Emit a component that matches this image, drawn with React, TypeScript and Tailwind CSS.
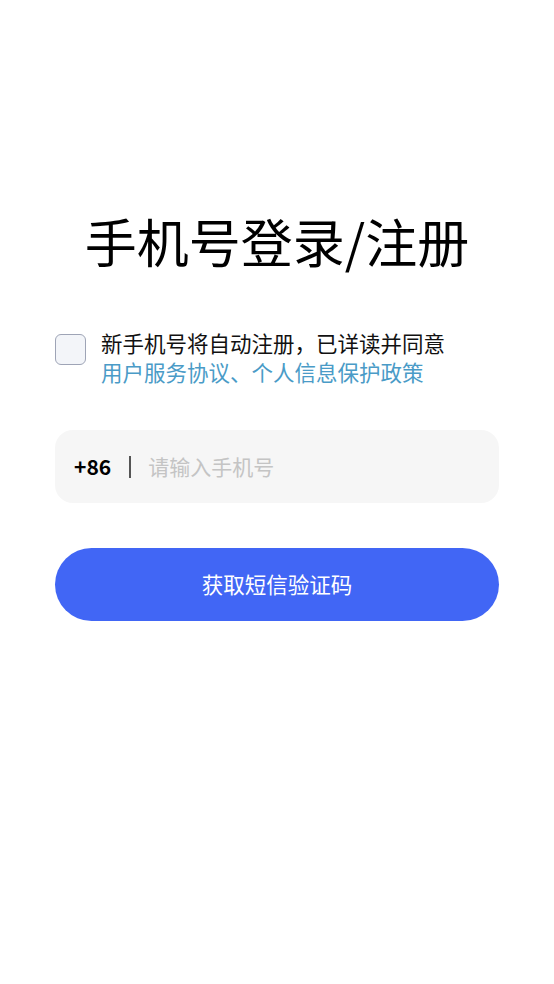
const font = { fontFamily: '"Noto Sans CJK SC", "Noto Sans", sans-serif' };

export default function App() {
  return (
    <div className="min-h-[984px] w-full bg-white px-[55px] pt-[206px]" style={font}>
      <h1 className="text-center text-[52px] font-normal leading-[70px] text-black">
        手机号登录/注册
      </h1>

      <div className="mt-[52px] flex items-start gap-[15px]">
        <button
          type="button"
          aria-label="同意协议"
          className="mt-[6px] h-[31px] w-[31px] flex-none rounded-[6px] border-[1.5px] border-[#9ea4b6] bg-[#f3f5f9]"
        />
        <p className="text-[21.5px] leading-[29px] text-[#111]">
          新手机号将自动注册，已详读并同意
          <br />
          <span className="text-[#4a9bc7]">用户服务协议、个人信息保护政策</span>
        </p>
      </div>

      <div className="mt-[44px] flex h-[73px] items-center rounded-[18px] bg-[#f6f6f6] pl-[19px]">
        <span className="text-[21px] font-bold text-black">+86</span>
        <span className="ml-[18px] h-[22px] w-[2px] bg-[#555]" />
        <input
          placeholder="请输入手机号"
          className="ml-[17px] min-w-0 flex-1 bg-transparent text-[21px] text-black outline-none placeholder:text-[#c4c4c4]"
        />
      </div>

      <button
        type="button"
        className="mt-[45px] flex h-[73px] w-full items-center justify-center rounded-full bg-[#4166f5] text-[21.5px] text-white"
      >
        获取短信验证码
      </button>
    </div>
  );
}
